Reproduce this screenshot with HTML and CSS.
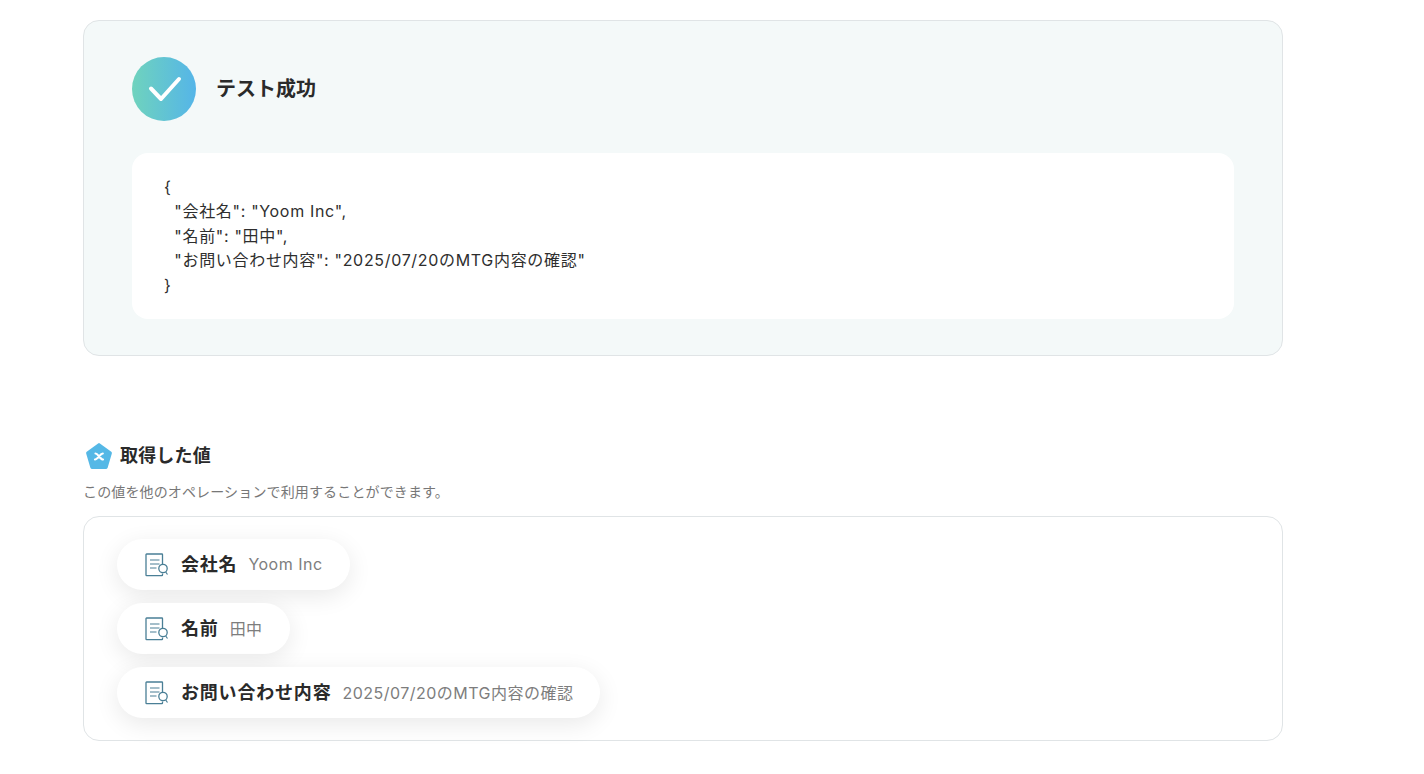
FILE: index.html
```html
<!DOCTYPE html>
<html lang="ja">
<head>
<meta charset="utf-8">
<title>テスト成功</title>
<link rel="stylesheet" href="styles.css">
</head>
<body>
<main class="page">
  <section class="result">
    <div class="result-head">
      <svg class="check" width="64" height="64" viewBox="0 0 64 64">
        <defs><linearGradient id="g" x1="0" y1="0" x2="1" y2="0"><stop offset="0" stop-color="#6fd3bd"/><stop offset="1" stop-color="#55b5e8"/></linearGradient></defs>
        <circle cx="32" cy="32" r="32" fill="url(#g)"/>
        <path d="M19 31.5L29 42L47 22" fill="none" stroke="#fff" stroke-width="4" stroke-linecap="round" stroke-linejoin="round"/>
      </svg>
      <h2 class="result-title">テスト成功</h2>
    </div>
    <pre class="code">{
  "会社名": "Yoom Inc",
  "名前": "田中",
  "お問い合わせ内容": "2025/07/20のMTG内容の確認"
}</pre>
  </section>
  <section class="values">
    <div class="values-head">
      <svg class="penta" width="28" height="28" viewBox="0 0 28 28">
        <path d="M14 2.6L25.4 11L21.2 25.4H6.8L2.6 11Z" fill="#55b8e6" stroke="#55b8e6" stroke-width="3" stroke-linejoin="round"/>
        <path d="M10.5 11.5C13 11.5 15 17.5 18 17.5M17.8 11.5C15 11.5 13 17.5 10 17.5" fill="none" stroke="#fff" stroke-width="2.2" stroke-linecap="round"/>
      </svg>
      <h3 class="values-title">取得した値</h3>
    </div>
    <p class="values-note">この値を他のオペレーションで利用することができます。</p>
    <div class="values-box">
      <div class="pill">
        <svg class="doc" width="24" height="24" viewBox="0 0 24 24"><use href="#doc"/></svg>
        <span class="pill-key">会社名</span><span class="pill-val">Yoom Inc</span>
      </div>
      <div class="pill">
        <svg class="doc" width="24" height="24" viewBox="0 0 24 24"><use href="#doc"/></svg>
        <span class="pill-key">名前</span><span class="pill-val">田中</span>
      </div>
      <div class="pill">
        <svg class="doc" width="24" height="24" viewBox="0 0 24 24"><use href="#doc"/></svg>
        <span class="pill-key">お問い合わせ内容</span><span class="pill-val">2025/07/20のMTG内容の確認</span>
      </div>
    </div>
  </section>
</main>
<svg class="defs" width="0" height="0">
  <symbol id="doc" viewBox="0 0 24 24">
    <path d="M18.5 11V1.6a.6.6 0 0 0 -.6 -.6H2.6a.6.6 0 0 0 -.6 .6V22a.6.6 0 0 0 .6 .6H17.9a.6.6 0 0 0 .6 -.6V20.5" fill="none" stroke="#4a7f96" stroke-width="1.3"/>
    <path d="M6 7H15.5M6 11H15.5M6 15H12.5" fill="none" stroke="#4a7f96" stroke-width="1.1"/>
    <circle cx="19" cy="15.5" r="4.2" fill="#fff" stroke="#4a7f96" stroke-width="1.3"/>
    <path d="M21.7 19L23.5 21.5" fill="none" stroke="#4a7f96" stroke-width="1.2"/>
  </symbol>
</svg>
</body>
</html>
```
FILE: styles.css
```css
* { box-sizing: border-box; }
html, body { margin: 0; padding: 0; background: #fff; }
body { font-family: Inter, "Noto Sans CJK JP", sans-serif; color: #222; overflow: hidden; height: 774px; }
.page { width: 1200px; margin-left: 83px; padding-top: 20px; }
.result { height: 336px; background: #f4f9f9; border: 1px solid #e0e4e6; border-radius: 16px; padding: 36px 48px; }
.result-head { display: flex; align-items: center; gap: 20px; }
.check { display: block; flex: none; }
.result-title { margin: 0; font-size: 20px; font-weight: 600; line-height: 30px; color: #2a2a2a; }
.code { margin: 32px 0 0; height: 166px; background: #fff; border-radius: 16px; padding: 22px 32px; font-family: Inter, "Noto Sans CJK JP", sans-serif; font-size: 16px; line-height: 24.4px; letter-spacing: 0.68px; color: #2e2e2e; }
.values { margin-top: 85px; }
.values-head { display: flex; align-items: center; gap: 7px; height: 30px; padding-left: 2px; }
.penta { display: block; flex: none; }
.values-title { margin: 0; font-size: 18px; font-weight: 600; line-height: 30px; letter-spacing: 0.01em; color: #2a2a2a; }
.values-note { margin: 11px 0 0; font-size: 14px; line-height: 20px; color: #777; letter-spacing: 0.01em; }
.values-box { margin-top: 14px; height: 225px; border: 1px solid #e0e4e6; border-radius: 16px; padding: 22px 33px; display: flex; flex-direction: column; align-items: flex-start; gap: 13px; }
.pill { display: flex; align-items: center; height: 51px; padding: 0 27px 0 27px; background: #fff; border-radius: 26px; box-shadow: 0 6px 24px rgba(0,0,0,0.09); }
.doc { display: block; flex: none; margin-right: 13px; }
.pill-key { padding-bottom: 3px; font-size: 18px; font-weight: 600; color: #2a2a2a; letter-spacing: 0.045em; }
.pill-val { padding-bottom: 2px; margin-left: 11px; font-size: 16px; color: #7d7d7d; letter-spacing: 0.03em; }
.defs { position: absolute; }
```
